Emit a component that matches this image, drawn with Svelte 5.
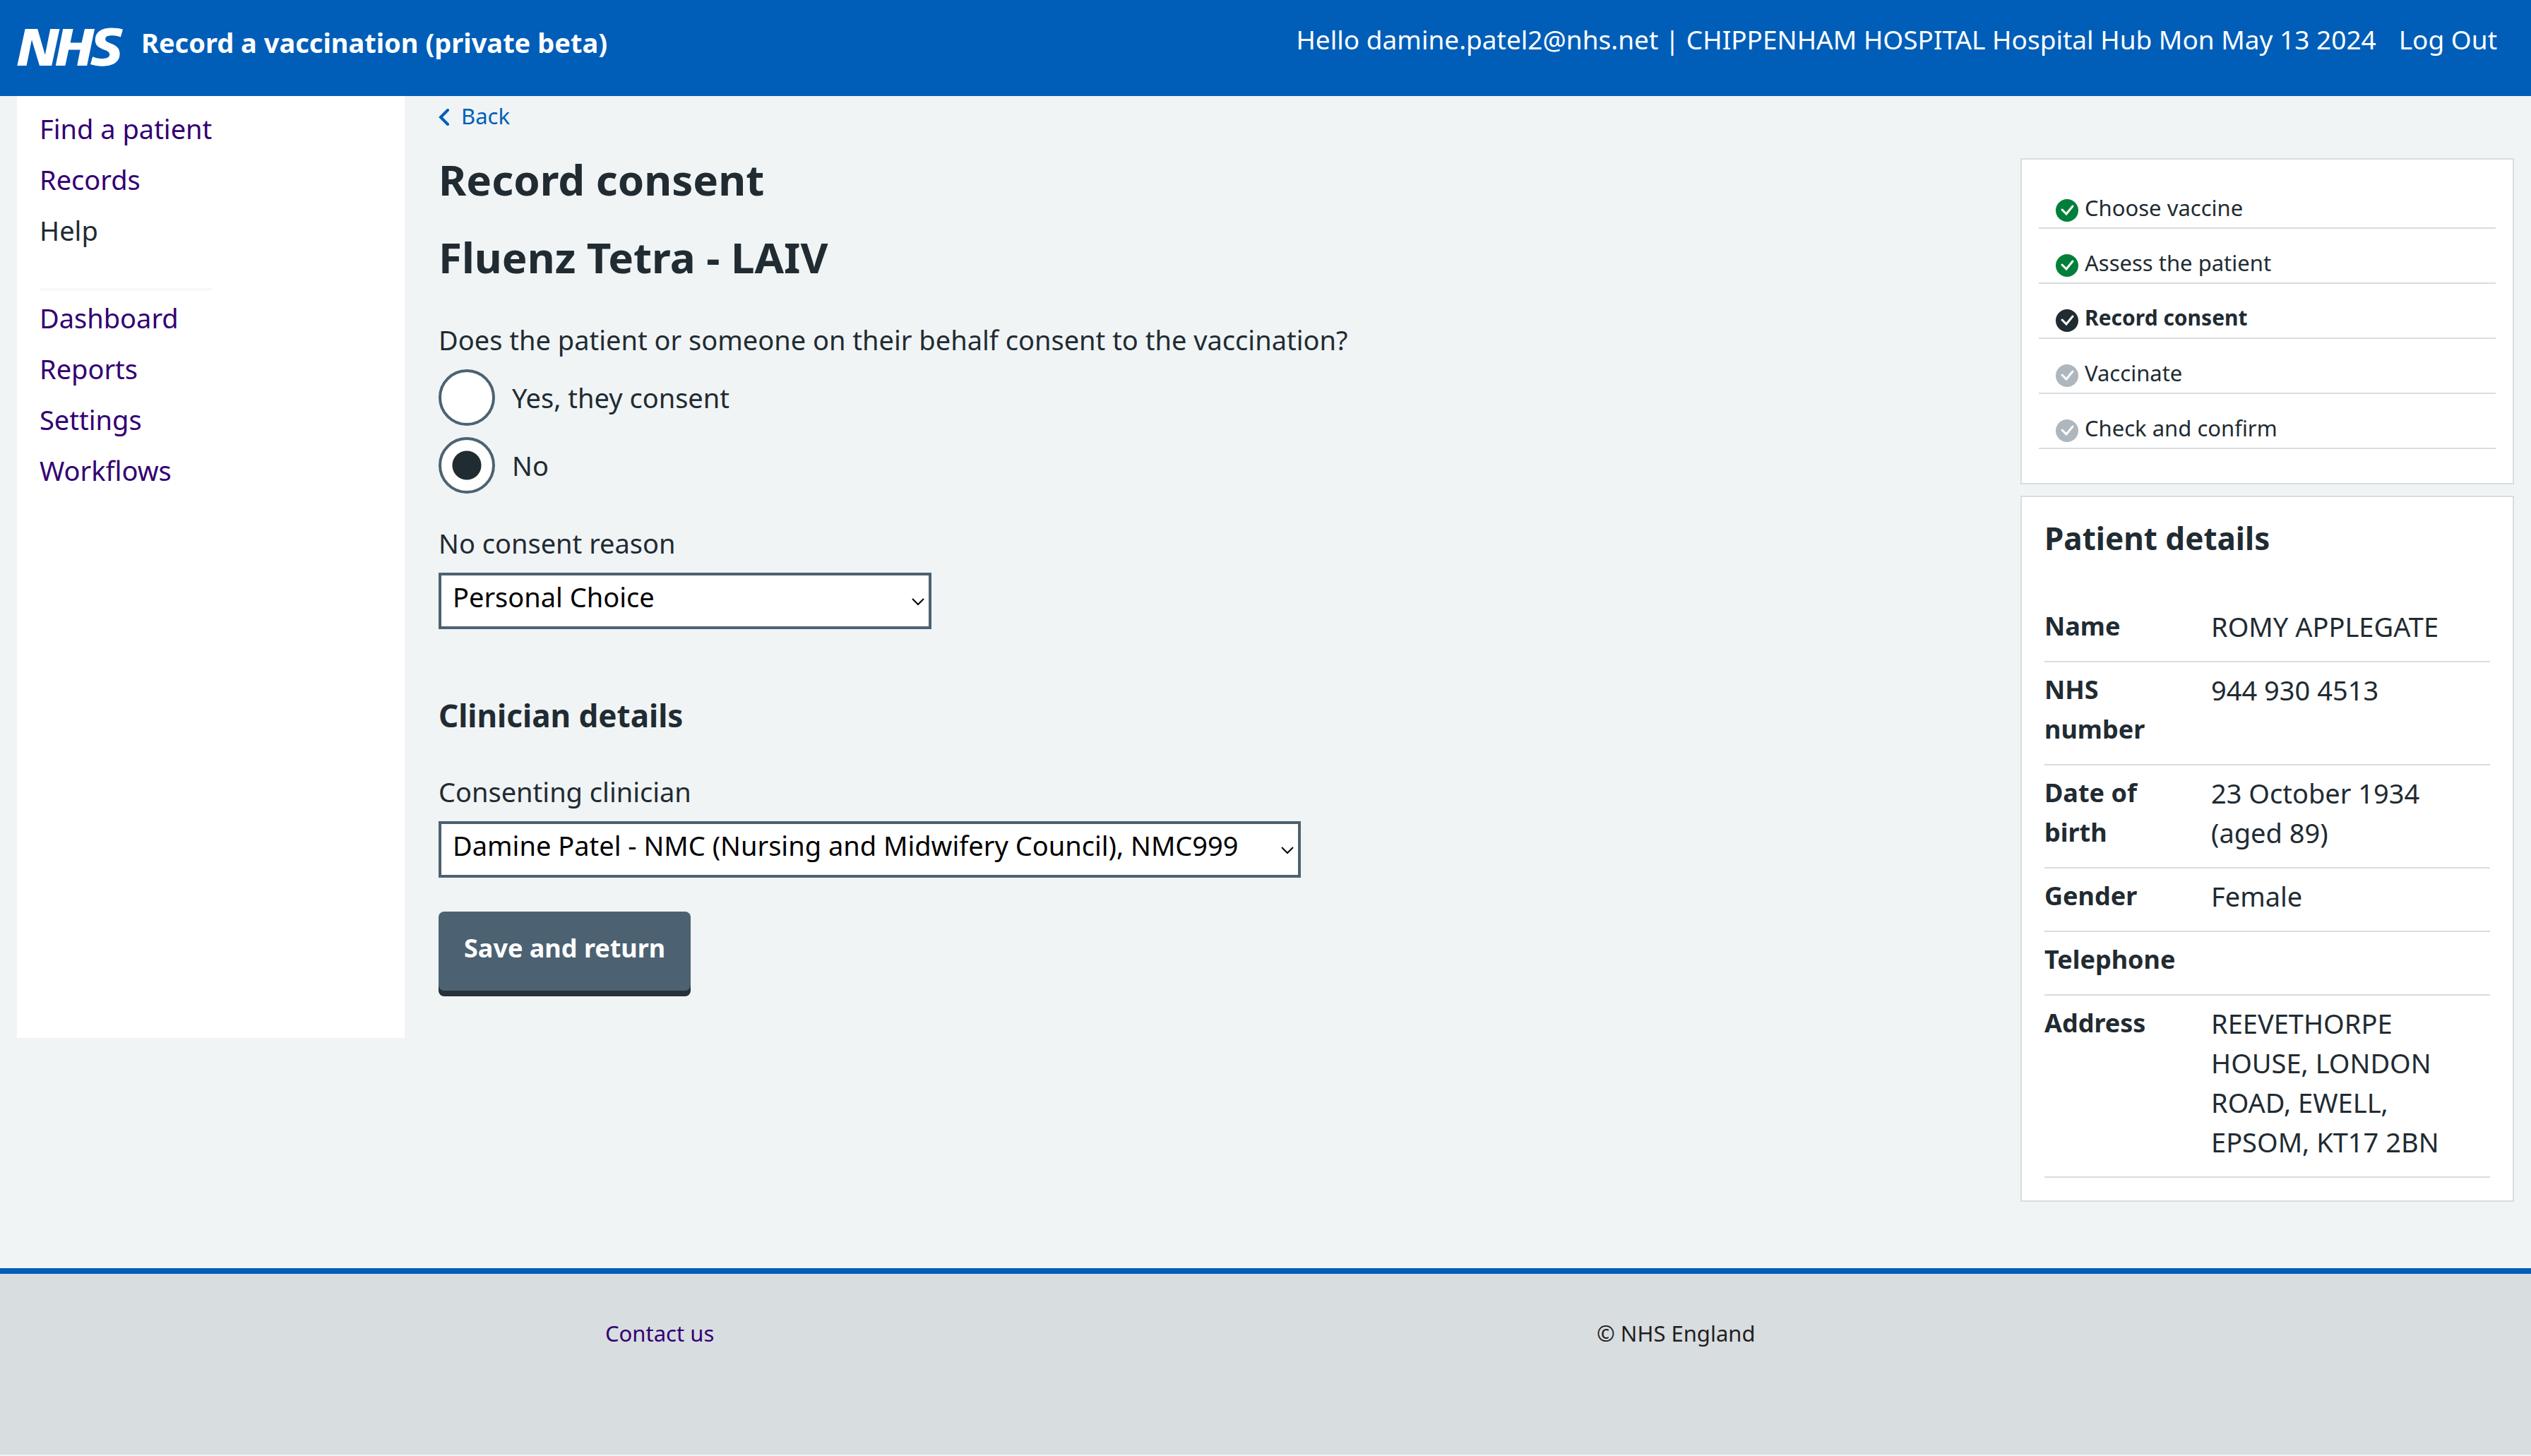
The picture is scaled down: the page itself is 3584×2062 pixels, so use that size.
<script>
  const mainLinks = ['Find a patient', 'Records'];
  const adminLinks = ['Dashboard', 'Reports', 'Settings', 'Workflows'];
  const steps = [
    { name: 'Choose vaccine', state: 'done' },
    { name: 'Assess the patient', state: 'done' },
    { name: 'Record consent', state: 'current' },
    { name: 'Vaccinate', state: 'todo' },
    { name: 'Check and confirm', state: 'todo' }
  ];
  const details = [
    ['Name', 'ROMY APPLEGATE'],
    ['NHS number', '944 930 4513'],
    ['Date of birth', '23 October 1934 (aged 89)'],
    ['Gender', 'Female'],
    ['Telephone', ''],
    ['Address', 'REEVETHORPE HOUSE, LONDON ROAD, EWELL, EPSOM, KT17 2BN']
  ];
  let consent = $state('no');
  let reason = $state('Personal Choice');
</script>

<div class="page">
  <header>
    <a class="brand" href="#home">
      <svg class="logo" viewBox="0 0 40 16" role="img" aria-label="NHS">
        <path fill="#fff" d="M3.9 1.5h4.4l2.6 9h.1l1.8-9h3.3l-2.8 13H9l-2.7-9h-.1l-1.8 9H1.1M17.3 1.5h3.6l-1 4.9h4L25 1.5h3.5l-2.7 13h-3.5l1.1-5.6h-4.1l-1.2 5.6h-3.4M37.7 4.4c-.7-.3-1.6-.6-2.9-.6-1.4 0-2.5.2-2.5 1.3 0 1.8 5.1 1.2 5.1 5.1 0 3.6-3.3 4.5-6.4 4.5-1.3 0-2.9-.3-4-.7l.8-2.7c.7.4 2.1.7 3.2.7s2.8-.2 2.8-1.5c0-2.1-5.1-1.3-5.1-5 0-3.4 2.9-4.4 5.8-4.4 1.6 0 3.1.2 4 .6" />
      </svg>
      <span>Record a vaccination (private beta)</span>
    </a>
    <div class="user">
      <span>Hello damine.patel2@nhs.net | CHIPPENHAM HOSPITAL Hospital Hub Mon May 13 2024</span>
      <a href="#logout">Log Out</a>
    </div>
  </header>

  <div class="body">
    <nav>
      <ul>
        {#each mainLinks as link}<li><a href="#{link}">{link}</a></li>{/each}
        <li><a class="plain" href="#help">Help</a></li>
        <li class="rule"></li>
        {#each adminLinks as link}<li><a href="#{link}">{link}</a></li>{/each}
      </ul>
    </nav>

    <main>
      <a class="back" href="#back">
        <svg viewBox="0 0 16 24" aria-hidden="true"><path d="M13 2 3 12l10 10" /></svg>
        Back
      </a>
      <h1>Record consent</h1>
      <h1>Fluenz Tetra - LAIV</h1>
      <form>
        <fieldset>
          <legend>Does the patient or someone on their behalf consent to the vaccination?</legend>
          <label class="choice"><input type="radio" name="consent" value="yes" bind:group={consent} />Yes, they consent</label>
          <label class="choice"><input type="radio" name="consent" value="no" bind:group={consent} />No</label>
        </fieldset>

        <label class="caption" for="reason">No consent reason</label>
        <div class="select reason">
          <select id="reason" bind:value={reason}><option>Personal Choice</option></select>
          <svg viewBox="0 0 18 12" aria-hidden="true"><path d="m1 1 8 8 8-8" /></svg>
        </div>

        <h2>Clinician details</h2>
        <label class="caption" for="clinician">Consenting clinician</label>
        <div class="select clinician">
          <select id="clinician"><option>Damine Patel - NMC (Nursing and Midwifery Council), NMC999</option></select>
          <svg viewBox="0 0 18 12" aria-hidden="true"><path d="m1 1 8 8 8-8" /></svg>
        </div>

        <button type="button">Save and return</button>
      </form>
    </main>

    <aside>
      <section class="card progress">
        <ol>
          {#each steps as step}
            <li class={step.state}>
              <svg viewBox="0 0 32 32" aria-hidden="true">
                <circle cx="16" cy="16" r="16" />
                <path d="m9 15 6 6 9-11" />
              </svg>
              {step.name}
            </li>
          {/each}
        </ol>
      </section>
      <section class="card patient">
        <h2>Patient details</h2>
        <dl>
          {#each details as [term, value]}
            <div><dt>{term}</dt><dd>{value}</dd></div>
          {/each}
        </dl>
      </section>
    </aside>
  </div>

  <footer>
    <a href="#contact">Contact us</a>
    <p>© NHS England</p>
  </footer>
</div>

<style>
  :global(body) {
    margin: 0;
    background: #f0f4f5;
  }
  .page {
    font: 38px/56px 'Noto Sans', 'Open Sans', sans-serif;
    color: #212b32;
  }
  .page * {
    box-sizing: border-box;
  }
  a {
    color: #330072;
    text-decoration: none;
  }
  ul, ol, dl, dd, p {
    list-style: none;
    margin: 0;
    padding: 0;
  }
  header {
    display: flex;
    justify-content: space-between;
    align-items: flex-start;
    height: 136px;
    padding: 28px 48px 0 20px;
    background: #005eb8;
    color: #fff;
  }
  header a {
    color: #fff;
  }
  .brand {
    display: flex;
    align-items: center;
    gap: 20px;
    padding-top: 4px;
    font-weight: 700;
  }
  .brand span {
    padding-bottom: 14px;
  }
  .logo {
    width: 160px;
    height: 64px;
  }
  .user {
    display: flex;
    gap: 32px;
    font-size: 37px;
  }
  .body {
    display: grid;
    grid-template-columns: 549px 1fr 699px;
    align-items: start;
    gap: 48px;
    padding: 0 24px 94px;
  }
  nav {
    min-height: 1334px;
    padding: 10px 32px;
    background: #fff;
  }
  nav ul {
    width: max-content;
  }
  nav li {
    height: 72px;
    line-height: 72px;
  }
  .plain {
    color: #212b32;
  }
  nav .rule {
    height: 4px;
    margin: 46px 0 2px;
    background: #f8f8f8;
  }
  .back {
    display: flex;
    align-items: center;
    gap: 16px;
    height: 56px;
    margin-bottom: 4px;
    color: #005eb8;
    font-size: 31px;
  }
  .back svg {
    width: 16px;
    height: 24px;
    margin-top: 4px;
    fill: none;
    stroke: #005eb8;
    stroke-width: 4;
    stroke-linecap: round;
  }
  h1 {
    margin: 0 0 12px;
    padding-top: 18px;
    font-size: 60px;
    line-height: 80px;
  }
  h2 {
    margin: 0;
    font-size: 44px;
    line-height: 64px;
  }
  form {
    padding-top: 37px;
  }
  fieldset {
    margin: 0;
    padding: 0;
    border: 0;
  }
  legend {
    padding: 0 0 14px;
  }
  .choice {
    display: flex;
    align-items: center;
    gap: 24px;
    height: 80px;
    margin-bottom: 16px;
  }
  input {
    appearance: none;
    width: 80px;
    height: 80px;
    margin: 0;
    border: 4px solid #4c6272;
    border-radius: 50%;
    background: #fff;
  }
  input:checked {
    background: radial-gradient(circle, #212b32 20px, #fff 21px);
  }
  .caption {
    display: block;
    margin: 26px 0 14px;
  }
  .select {
    position: relative;
    max-width: 100%;
  }
  .reason {
    width: 698px;
  }
  .clinician {
    width: 1221px;
  }
  select {
    appearance: none;
    display: block;
    width: 100%;
    height: 80px;
    padding: 0 48px 12px 16px;
    border: 4px solid #4c6272;
    border-radius: 0;
    background: #fff;
    color: #000;
    font: inherit;
  }
  .select svg {
    position: absolute;
    right: 10px;
    top: 36px;
    width: 18px;
    height: 12px;
    fill: none;
    stroke: #000;
    stroke-width: 2;
  }
  form h2 {
    margin: 90px 0 48px;
  }
  button {
    display: block;
    height: 112px;
    margin-top: 48px;
    padding: 0 36px 8px;
    border: 0;
    border-radius: 8px;
    background: #4c6272;
    box-shadow: 0 8px 0 #263139;
    color: #fff;
    font: inherit;
    font-size: 36px;
    font-weight: 700;
  }
  .card {
    border: 2px solid #d8dde0;
    background: #fff;
  }
  .progress {
    margin: 88px 0 16px;
    padding: 20px 24px 48px;
  }
  .progress li {
    display: flex;
    align-items: center;
    gap: 9px;
    height: 78px;
    padding: 20px 24px 0;
    border-bottom: 2px solid #d8dde0;
    font-size: 31px;
  }
  .progress svg {
    width: 32px;
    height: 32px;
    margin-top: 8px;
  }
  .progress path {
    fill: none;
    stroke: #fff;
    stroke-width: 3;
    stroke-linecap: round;
  }
  .done circle {
    fill: #007f3b;
  }
  .current circle {
    fill: #212b32;
  }
  .todo circle {
    fill: #aeb7bd;
  }
  .progress .current {
    font-size: 30px;
    font-weight: 700;
  }
  .patient {
    padding: 26px 32px 32px;
  }
  .patient h2 {
    margin-bottom: 54px;
  }
  dl div {
    display: grid;
    grid-template-columns: 190px 1fr;
    gap: 46px;
    min-height: 90px;
    padding: 11px 48px 21px 0;
    border-bottom: 2px solid #d8dde0;
  }
  dt {
    font-size: 36px;
    font-weight: 700;
  }
  footer {
    display: grid;
    grid-template-columns: 1404px 1fr;
    height: 264px;
    padding: 56px 24px 0 857px;
    border-top: 8px solid #005eb8;
    background: #d8dde0;
    font-size: 31px;
  }
  footer p {
    color: #231f20;
  }
</style>
